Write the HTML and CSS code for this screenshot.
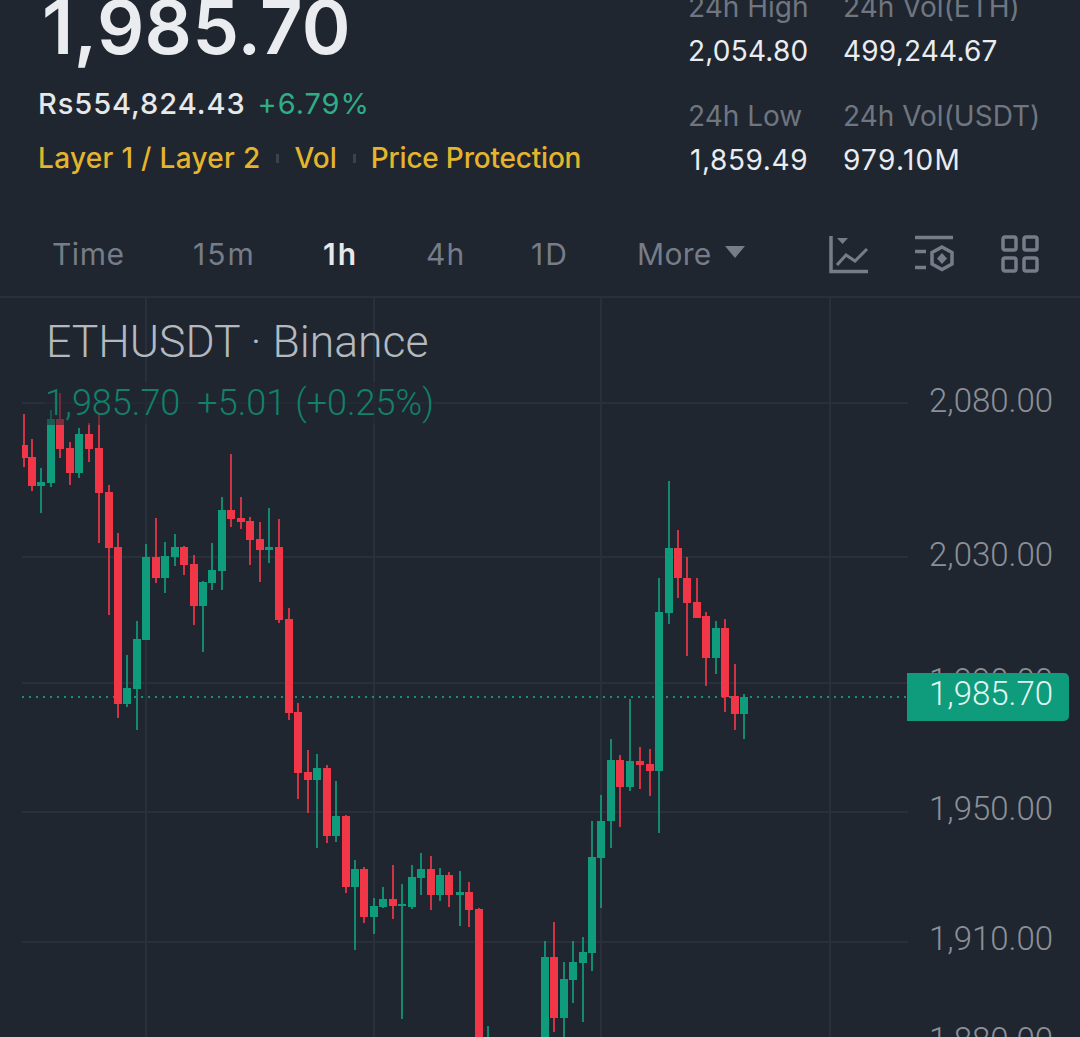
FILE: index.html
```html
<!DOCTYPE html>
<html lang="en">
<head>
    <meta charset="UTF-8">
    <meta name="viewport" content="width=device-width, initial-scale=1.0">
    <title>ETHUSDT</title>
    <link rel="stylesheet" href="styles.css">
</head>
<body>
<div class="page">
    <div class="summary">
        <div class="price-col">
            <div class="last-price">1,985.70</div>
            <div class="sub-price"><span class="fiat">Rs554,824.43</span><span class="change">+6.79%</span></div>
            <div class="tags">
                <span>Layer 1 / Layer 2</span><i class="tag-sep"></i>
                <span>Vol</span><i class="tag-sep"></i>
                <span>Price Protection</span>
            </div>
        </div>
        <div class="stats">
            <div class="stat"><div class="stat-label">24h High</div><div class="stat-value">2,054.80</div></div>
            <div class="stat"><div class="stat-label">24h Vol(ETH)</div><div class="stat-value">499,244.67</div></div>
            <div class="stat"><div class="stat-label">24h Low</div><div class="stat-value shifted">1,859.49</div></div>
            <div class="stat"><div class="stat-label">24h Vol(USDT)</div><div class="stat-value wide">979.10M</div></div>
        </div>
    </div>

    <div class="tabs">
        <span class="tab tab-time">Time</span>
        <span class="tab tab-15m">15m</span>
        <span class="tab tab-1h active">1h</span>
        <span class="tab tab-4h">4h</span>
        <span class="tab tab-1d">1D</span>
        <span class="tab tab-more">More<i class="caret"></i></span>
        <div class="tools">
            <svg class="tool" width="40" height="40" viewBox="0 0 40 40">
                <path d="M2 2V37.500H39" class="line"/>
                <path d="M8 4H19L13.500 10Z" class="fill"/>
                <path d="M8 31L17 21L26 27L38 15" class="line thin"/>
            </svg>
            <svg class="tool" width="40" height="40" viewBox="0 0 40 40">
                <path d="M1 3.500H39M1 17.500H12M1 33.500H12" class="line"/>
                <path d="M28 13L38 18.500V30L28 35.500L18 30V18.500Z" class="line"/>
                <path d="M28 19L33 24.500L28 30L23 24.500Z" class="fill"/>
            </svg>
            <svg class="tool" width="38" height="38" viewBox="0 0 38 38">
                <rect x="2" y="2" width="13" height="13" rx="2" class="line"/>
                <rect x="23" y="2" width="13" height="13" rx="2" class="line"/>
                <rect x="2" y="23" width="13" height="13" rx="2" class="line"/>
                <rect x="23" y="23" width="13" height="13" rx="2" class="line"/>
            </svg>
        </div>
    </div>

    <div class="chart">
        <svg id="candles" width="1080" height="739" viewBox="0 298 1080 739"></svg>
        <div class="chart-title">ETHUSDT · Binance</div>
        <div class="chart-legend"><span>1,985.70</span><span>+5.01</span><span>(+0.25%)</span></div>
    </div>
</div>
<script src="chart.js"></script>
</body>
</html>
```

FILE: styles.css
```css
*{
    box-sizing: border-box;
}
html, body{
    margin: 0;
    background-color: #1f2630;
}
.page{
    width: 1080px;
    height: 1037px;
    overflow: hidden;
    display: flex;
    flex-direction: column;
    font-family: Inter, "Liberation Sans", sans-serif;
}
.summary{
    height: 225px;
    display: flex;
    justify-content: space-between;
    flex: none;
}
.price-col{
    padding-left: 38px;
}
.last-price{
    margin-top: -17px;
    margin-left: 4px;
    font-size: 74px;
    line-height: 88px;
    font-weight: 600;
    letter-spacing: 0.4px;
    color: #eaecef;
}
.sub-price{
    margin-top: 16px;
    font-size: 29px;
    line-height: 34px;
    letter-spacing: 0.95px;
    display: flex;
    gap: 12px;
}
.fiat{
    color: #e6e8ea;
    font-weight: 500;
}
.change{
    color: #2ead86;
}
.tags{
    margin-top: 20px;
    display: flex;
    align-items: center;
    font-size: 28px;
    line-height: 34px;
    font-weight: 500;
    color: #e4b42d;
}
.tags span:first-child{
    letter-spacing: 0.3px;
}
.tags span:last-child{
    letter-spacing: -0.2px;
}
.tag-sep{
    width: 3px;
    height: 9px;
    margin: 0 15px 0 16px;
    background-color: #3b424c;
}
.stats{
    width: 392px;
    display: grid;
    grid-template-columns: 155px 1fr;
    grid-auto-rows: 109px;
    margin-top: -11px;
}
.stat-label{
    font-size: 28px;
    line-height: 36px;
    color: #6f7681;
}
.stat-value{
    margin-top: 8px;
    font-size: 28px;
    line-height: 36px;
    letter-spacing: 0.2px;
    color: #eaecef;
}
.shifted{
    margin-left: 2px;
    letter-spacing: 0.6px;
}
.wide{
    letter-spacing: 1.3px;
}
.tabs{
    height: 73px;
    flex: none;
    display: flex;
    align-items: center;
    padding-bottom: 13px;
    border-bottom: 2px solid #29303a;
    font-size: 30px;
    letter-spacing: 0.5px;
    color: #767d88;
}
.tab{
    display: flex;
    align-items: center;
}
.tab-time{
    margin-left: 52px;
    width: 141px;
}
.tab-15m{
    width: 130px;
    letter-spacing: 2px;
}
.tab-1h{
    width: 103px;
    letter-spacing: 2px;
}
.tab-4h{
    width: 105px;
    letter-spacing: 1px;
}
.tab-1d{
    width: 107px;
    letter-spacing: 2px;
}
.tab-more{
    width: 191px;
    margin-left: -1px;
    letter-spacing: 0.3px;
}
.active{
    color: #e6e8ea;
    font-weight: 600;
}
.caret{
    width: 0;
    height: 0;
    margin-left: 13px;
    margin-bottom: 4px;
    border-left: 10px solid transparent;
    border-right: 10px solid transparent;
    border-top: 12px solid #767d88;
}
.tools{
    display: flex;
    align-items: center;
    gap: 45px;
    margin-left: 1px;
}
.tool{
    display: block;
}
.tool:last-child{
    margin-left: 2px;
}
.line{
    fill: none;
    stroke: #767d88;
    stroke-width: 3.500;
}
.thin{
    stroke-width: 3;
}
.fill{
    fill: #767d88;
}
.chart{
    position: relative;
    flex: 1;
    font-family: Roboto, "Liberation Sans", sans-serif;
    font-weight: 300;
}
#candles{
    display: block;
}
.chart-title{
    position: absolute;
    left: 46px;
    top: 19px;
    font-size: 44.500px;
    line-height: 50px;
    color: #b4b9bf;
}
.chart-legend{
    position: absolute;
    left: 45px;
    top: 84px;
    height: 43px;
    display: flex;
    gap: 17px;
    font-size: 36px;
    line-height: 42px;
    color: #12806a;
    background-color: rgba(31, 38, 48, 0.55);
}
.chart-legend span:last-child{
    margin-left: -8px;
}
.axis-label{
    font-family: Roboto, "Liberation Sans", sans-serif;
    font-weight: 300;
    font-size: 33px;
    fill: #8b9098;
}
.now-label{
    font-family: Roboto, "Liberation Sans", sans-serif;
    font-weight: 300;
    font-size: 33px;
    fill: #e4f5f1;
}
```

FILE: chart.js
```js
// [x, wickTop, wickBottom, bodyTop, bodyBottom, up]
var candles = [
    [24,414,467,445,458,0],[32,439,491,457,486,0],[41,468,513,482,486,1],[51,410,487,419,483,1],
    [60,393,458,419,449,0],[70,442,485,448,473,0],[79,428,478,434,473,1],[89,423,462,434,449,0],
    [99,413,543,448,493,0],[109,485,615,492,548,0],[118,533,718,547,704,0],[127,655,707,688,704,1],
    [137,621,730,639,689,1],[146,544,640,557,640,1],[156,518,583,557,578,0],[165,542,593,556,578,1],
    [175,534,566,547,557,1],[184,546,575,547,565,0],[194,555,625,564,606,0],[203,581,652,582,606,1],
    [212,543,590,570,583,1],[222,497,590,510,571,1],[231,454,527,510,519,0],[241,497,529,518,522,0],
    [250,517,565,521,540,0],[260,522,582,539,550,0],[269,508,563,547,550,1],[279,519,623,547,620,0],
    [289,608,720,619,713,0],[298,703,799,712,773,0],[308,750,813,772,780,0],[317,754,848,768,780,1],
    [327,765,843,768,836,0],[336,781,842,816,836,1],[346,815,893,816,887,0],[355,860,950,869,887,1],
    [364,867,923,869,917,0],[374,898,934,906,917,1],[383,887,908,899,907,1],[393,865,919,899,906,0],
    [402,884,1019,904,906,1],[412,865,909,877,907,1],[421,853,895,869,878,1],[431,856,910,869,895,0],
    [440,868,901,875,895,1],[449,872,907,875,895,0],[460,871,926,892,895,1],[469,882,927,892,910,0],
    [479,908,1037,909,1037,0],[488,1026,1037,1037,1037,1],
    [545,941,1037,957,1037,1],[554,922,1032,957,1018,0],[564,962,1037,979,1018,1],[573,941,1003,962,980,1],
    [583,937,1022,952,963,1],[592,821,971,857,953,1],[601,795,908,821,858,1],[611,739,848,760,821,1],
    [620,755,827,760,787,0],[630,699,791,761,787,1],[640,747,789,761,765,0],[650,749,796,764,771,0],
    [659,578,833,612,771,1],[669,481,624,548,613,1],[678,530,598,548,578,0],[687,557,656,578,603,0],
    [697,578,618,602,618,0],[706,612,686,616,658,0],[716,621,674,628,658,1],[725,619,712,628,697,0],
    [735,664,730,696,714,0],[744,694,739,697,714,1]
];
var gridY = [403, 557, 683, 812, 942];
var gridX = [146, 374, 601, 830];
var axis = [["2,080.00",412],["2,030.00",566],["1,990.00",692],["1,950.00",820],["1,910.00",950],["1,880.00",1051]];

var svg = document.getElementById("candles");

function add(tag, attrs, text){
    var el = document.createElementNS("http://www.w3.org/2000/svg", tag);
    for (var k in attrs) el.setAttribute(k, attrs[k]);
    if (text) el.textContent = text;
    svg.appendChild(el);
    return el;
}

gridY.forEach(function(y){
    add("rect", {x:22, y:y-1, width:886, height:2, fill:"#29303a"});
});
gridX.forEach(function(x){
    add("rect", {x:x-1, y:298, width:2, height:739, fill:"#29303a"});
});

axis.forEach(function(a){
    add("text", {x:929, y:a[1], "class":"axis-label"}, a[0]);
});

add("line", {x1:22, y1:697, x2:908, y2:697, stroke:"#1a9078", "stroke-width":2, "stroke-dasharray":"2 5"});

candles.forEach(function(c){
    var color = c[5] ? "#0f9c7d" : "#f13648";
    add("rect", {x:c[0]-1, y:c[1], width:2, height:c[2]-c[1], fill:color, opacity:0.85});
    var left = Math.max(c[0]-4, 22);
    add("rect", {x:left, y:c[3], width:c[0]+4-left, height:Math.max(c[4]-c[3], 2), fill:color});
});

add("path", {d:"M907 673H1064a5 5 0 0 1 5 5V716a5 5 0 0 1-5 5H907Z", fill:"#0e9c7d"});
add("text", {x:929, y:705, "class":"now-label"}, "1,985.70");
```
